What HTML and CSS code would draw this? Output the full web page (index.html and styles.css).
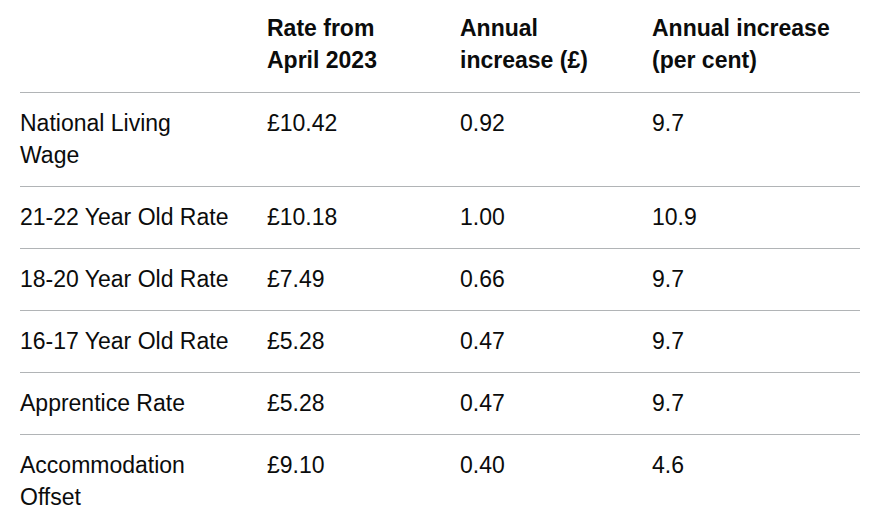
FILE: index.html
```html
<!DOCTYPE html>
<html lang="en">
<head>
<meta charset="utf-8">
<title>Minimum wage rates</title>
<link rel="stylesheet" href="styles.css">
</head>
<body>
<table class="rates">
  <thead>
    <tr>
      <th class="c1"></th>
      <th class="c2">Rate from April&nbsp;2023</th>
      <th class="c3">Annual increase&nbsp;(£)</th>
      <th class="c4">Annual increase (per&nbsp;cent)</th>
    </tr>
  </thead>
  <tbody>
    <tr><td>National Living Wage</td><td>£10.42</td><td>0.92</td><td>9.7</td></tr>
    <tr><td>21-22 Year Old Rate</td><td>£10.18</td><td>1.00</td><td>10.9</td></tr>
    <tr><td>18-20 Year Old Rate</td><td>£7.49</td><td>0.66</td><td>9.7</td></tr>
    <tr><td>16-17 Year Old Rate</td><td>£5.28</td><td>0.47</td><td>9.7</td></tr>
    <tr><td>Apprentice Rate</td><td>£5.28</td><td>0.47</td><td>9.7</td></tr>
    <tr><td>Accommodation Offset</td><td>£9.10</td><td>0.40</td><td>4.6</td></tr>
  </tbody>
</table>
</body>
</html>
```

FILE: styles.css
```css
html, body {
  margin: 0;
  padding: 0;
  background: #ffffff;
}

body {
  font-family: "Liberation Sans", Arial, sans-serif;
  font-size: 23px;
  color: #0b0c0c;
}

.rates {
  border-collapse: collapse;
  border-spacing: 0;
  table-layout: fixed;
  width: 840px;
  margin-left: 20px;
}

.rates .c1 { width: 247px; }
.rates .c2 { width: 193px; }
.rates .c3 { width: 192px; }
.rates .c4 { width: 208px; }

.rates th,
.rates td {
  box-sizing: border-box;
  text-align: left;
  vertical-align: top;
  padding: 14px 20px 15px 0;
  line-height: 32px;
  border-bottom: 1px solid #b1b4b6;
}

.rates td:first-child {
  padding-right: 34px;
}

.rates th {
  font-weight: 700;
  padding-top: 12px;
  padding-bottom: 16px;
}

.rates td {
  font-weight: 400;
}
```
